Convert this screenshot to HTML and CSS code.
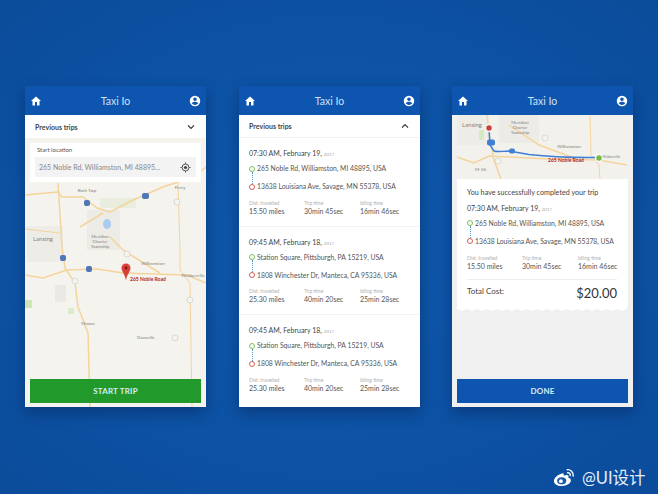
FILE: index.html
```html
<!DOCTYPE html>
<html lang="en">
<head>
  <meta charset="UTF-8" />
  <meta name="viewport" content="width=device-width, initial-scale=1.0" />
  <title>Taxi Io</title>
  <link rel="stylesheet" href="styles.css">
</head>
<body>
  <main class="screens">

    <!-- Start trip -->
    <section class="phone">
      <header class="topbar">
        <svg class="topbar-icon" viewBox="0 0 24 24"><path d="M10 21v-7h4v7h5v-9h3L12 3 2 12h3v9z"/></svg>
        <div class="topbar-title">Taxi Io</div>
        <svg class="topbar-icon" viewBox="0 0 24 24"><path fill-rule="evenodd" d="M12 1.500a10.500 10.500 0 1 0 0 21 10.500 10.500 0 0 0 0-21zm0 3.500a3.600 3.600 0 1 1 0 7.200 3.600 3.600 0 0 1 0-7.200zm0 15a8 8 0 0 1-6.500-3.300c.1-2.200 4.400-3.300 6.500-3.300s6.400 1.100 6.500 3.300A8 8 0 0 1 12 20z"/></svg>
      </header>
      <div class="trips-head">
        <span>Previous trips</span>
        <svg class="chevron" viewBox="0 0 12 8"><path d="M1.500 1.500 6 6l4.500-4.500"/></svg>
      </div>
      <div class="map-area">
        <svg class="map" viewBox="25 138 181 269">
          <rect x="25" y="138" width="181" height="269" fill="#f4f3ee"/>
          <rect x="27" y="226" width="36" height="36" fill="#eeece7"/>
          <rect x="87" y="210" width="33" height="40" fill="#ecebe6"/>
          <rect x="100" y="198" width="36" height="10" fill="#e8eddd"/>
          <rect x="25" y="300" width="7" height="8" fill="#cfe5b4"/>
          <rect x="68" y="308" width="6" height="6" fill="#dbeac8"/>
          <rect x="55" y="285" width="11" height="17" fill="#ebe9e4"/>
          <ellipse cx="107" cy="224" rx="4" ry="5" fill="#a9cdf0"/>
          <g class="road">
            <path d="M25 195 58 192 62 197 83 197 97 208 110 212 133 200 163 187 193 177 206 167"/>
            <path d="M58 183 62 247 65 268 75 283 78 307 88 333 90 407"/>
            <path d="M25 275 43 278 67 270 97 269 123 273 187 275 206 283"/>
            <path d="M80 227 103 213"/>
            <path d="M110 237 123 250 147 265 160 273"/>
            <path class="road-thin" d="M178 183 180 250 180 270 190 283 192 407"/>
            <path class="road-thin" d="M25 229 60 233"/>
          </g>
          <g class="map-label">
            <text x="87" y="192" text-anchor="middle">Bath Twp</text>
            <text x="180" y="189" text-anchor="middle">Perry</text>
            <text x="33" y="241" class="map-city">Lansing</text>
            <text x="100" y="238" text-anchor="middle">Meridian</text>
            <text x="100" y="243" text-anchor="middle">Charter</text>
            <text x="100" y="248" text-anchor="middle">Township</text>
            <text x="153" y="265" text-anchor="middle">Williamston</text>
            <text x="205" y="276.500" text-anchor="end">Webberville</text>
            <text x="88" y="325" text-anchor="middle">Mason</text>
            <text x="146" y="339" text-anchor="middle">Dansville</text>
          </g>
          <g class="shield">
            <rect x="84" y="200" width="6" height="6" rx="2"/>
            <rect x="142" y="193" width="7" height="6" rx="2"/>
            <rect x="86" y="266" width="6" height="6" rx="2"/>
            <rect x="60" y="255" width="6" height="6" rx="2"/>
          </g>
          <g class="shield-light">
            <circle cx="177" cy="202" r="3"/>
            <circle cx="75" cy="281" r="3"/>
            <circle cx="127" cy="254" r="3"/>
            <circle cx="190" cy="300" r="3"/>
            <circle cx="175" cy="338" r="3"/>
          </g>
          <path d="M126 263.500a4.500 4.500 0 0 0-4.500 4.500c0 3.500 3.500 6 4.500 12.500 1-6.500 4.500-9 4.500-12.500a4.500 4.500 0 0 0-4.500-4.500z" fill="#d8403a"/>
          <circle cx="126" cy="268" r="1.400" fill="#7d1512"/>
          <text x="130" y="281" class="map-place">265 Noble Road</text>
        </svg>
        <div class="location-card">
          <div class="location-label">Start location</div>
          <div class="location-field">
            <span>265 Noble Rd, Williamston, MI 48895...</span>
            <svg class="target" viewBox="0 0 24 24"><circle cx="12" cy="12" r="7.500"/><circle class="target-dot" cx="12" cy="12" r="3.500"/><path d="M12 1v3M12 20v3M1 12h3M20 12h3"/></svg>
          </div>
        </div>
        <button class="action action-green">START TRIP</button>
      </div>
    </section>

    <!-- Previous trips list -->
    <section class="phone">
      <header class="topbar">
        <svg class="topbar-icon" viewBox="0 0 24 24"><path d="M10 21v-7h4v7h5v-9h3L12 3 2 12h3v9z"/></svg>
        <div class="topbar-title">Taxi Io</div>
        <svg class="topbar-icon" viewBox="0 0 24 24"><path fill-rule="evenodd" d="M12 1.500a10.500 10.500 0 1 0 0 21 10.500 10.500 0 0 0 0-21zm0 3.500a3.600 3.600 0 1 1 0 7.200 3.600 3.600 0 0 1 0-7.200zm0 15a8 8 0 0 1-6.500-3.300c.1-2.200 4.400-3.300 6.500-3.300s6.400 1.100 6.500 3.300A8 8 0 0 1 12 20z"/></svg>
      </header>
      <div class="trips-head trips-head-line">
        <span>Previous trips</span>
        <svg class="chevron" viewBox="0 0 12 8"><path d="M1.500 6.500 6 2l4.500 4.500"/></svg>
      </div>

      <article class="trip">
        <div class="trip-date">07:30 AM, February 19, <small>2017</small></div>
        <div class="route">
          <div class="route-marks"><i class="dot dot-start"></i><i class="dots"></i><i class="dot dot-end"></i></div>
          <div class="route-names"><span>265 Noble Rd, Williamston, MI 48895, USA</span><span>13638 Louisiana Ave, Savage, MN 55378, USA</span></div>
        </div>
        <div class="stats">
          <div><label>Dist. travelled</label><b>15.50 miles</b></div>
          <div><label>Trip time</label><b>30min 45sec</b></div>
          <div><label>Idling time</label><b>16min 46sec</b></div>
        </div>
      </article>

      <article class="trip">
        <div class="trip-date">09:45 AM, February 18, <small>2017</small></div>
        <div class="route">
          <div class="route-marks"><i class="dot dot-start"></i><i class="dots"></i><i class="dot dot-end"></i></div>
          <div class="route-names"><span>Station Square, Pittsburgh, PA 15219, USA</span><span>1808 Winchester Dr, Manteca, CA 95336, USA</span></div>
        </div>
        <div class="stats">
          <div><label>Dist. travelled</label><b>25.30 miles</b></div>
          <div><label>Trip time</label><b>40min 20sec</b></div>
          <div><label>Idling time</label><b>25min 28sec</b></div>
        </div>
      </article>

      <article class="trip">
        <div class="trip-date">09:45 AM, February 18, <small>2017</small></div>
        <div class="route">
          <div class="route-marks"><i class="dot dot-start"></i><i class="dots"></i><i class="dot dot-end"></i></div>
          <div class="route-names"><span>Station Square, Pittsburgh, PA 15219, USA</span><span>1808 Winchester Dr, Manteca, CA 95336, USA</span></div>
        </div>
        <div class="stats">
          <div><label>Dist. travelled</label><b>25.30 miles</b></div>
          <div><label>Trip time</label><b>40min 20sec</b></div>
          <div><label>Idling time</label><b>25min 28sec</b></div>
        </div>
      </article>
    </section>

    <!-- Receipt -->
    <section class="phone phone-grey">
      <header class="topbar">
        <svg class="topbar-icon" viewBox="0 0 24 24"><path d="M10 21v-7h4v7h5v-9h3L12 3 2 12h3v9z"/></svg>
        <div class="topbar-title">Taxi Io</div>
        <svg class="topbar-icon" viewBox="0 0 24 24"><path fill-rule="evenodd" d="M12 1.500a10.500 10.500 0 1 0 0 21 10.500 10.500 0 0 0 0-21zm0 3.500a3.600 3.600 0 1 1 0 7.200 3.600 3.600 0 0 1 0-7.200zm0 15a8 8 0 0 1-6.500-3.300c.1-2.200 4.400-3.300 6.500-3.300s6.400 1.100 6.500 3.300A8 8 0 0 1 12 20z"/></svg>
      </header>
      <div class="receipt">
        <svg class="route-map" viewBox="458 115 170 64">
          <rect x="458" y="115" width="170" height="64" fill="#f2f1ec"/>
          <rect x="458" y="115" width="32" height="30" fill="#eeece7"/>
          <rect x="500" y="115" width="40" height="28" fill="#ecebe6"/>
          <rect x="480" y="130" width="5" height="10" fill="#d8e8c2"/>
          <g class="road">
            <path d="M488 115 491 140 495 160 502 179"/>
            <path d="M458 157 475 163 490 156 510 157 550 159 600 160 628 165"/>
            <path d="M510 125 540 145 575 158"/>
            <path class="road-thin" d="M591 115 592 155 600 165 601 179"/>
          </g>
          <g class="map-label">
            <text x="473" y="127" text-anchor="middle" class="map-city">Lansing</text>
            <text x="521" y="124" text-anchor="middle">Meridian</text>
            <text x="521" y="129" text-anchor="middle">Charter</text>
            <text x="521" y="134" text-anchor="middle">Township</text>
            <text x="570" y="147.500" text-anchor="middle">Williamston</text>
            <text x="603" y="157.500" class="map-tiny">Webberville</text>
            <text x="487" y="171" text-anchor="end">M-36</text>
          </g>
          <g class="shield-light">
            <circle cx="546" cy="138" r="3"/>
            <circle cx="499" cy="161" r="3"/>
          </g>
          <path d="M490 128 491 145 495 151Q497 152 510 151L530 154.500Q560 158 600 157.500" fill="none" stroke="#3f7fd4" stroke-width="1.500"/>
          <rect x="488" y="139.500" width="8" height="6" rx="2" fill="#3f7fd4"/>
          <rect x="510" y="148.500" width="6" height="5" rx="2" fill="#3f7fd4"/>
          <circle cx="490" cy="128" r="3.500" fill="#c9403c" stroke="#f7f7f7" stroke-width="1.500"/>
          <circle cx="600" cy="158" r="3.500" fill="#74b944" stroke="#f7f7f7" stroke-width="1.500"/>
          <text x="549" y="162" class="map-place">265 Noble Road</text>
        </svg>
        <div class="ticket">
          <p class="ticket-note">You have successfully completed your trip</p>
          <div class="trip-date">07:30 AM, February 19, <small>2017</small></div>
          <div class="route">
            <div class="route-marks"><i class="dot dot-start"></i><i class="dots"></i><i class="dot dot-end"></i></div>
            <div class="route-names"><span>265 Noble Rd, Williamston, MI 48895, USA</span><span>13638 Louisiana Ave, Savage, MN 55378, USA</span></div>
          </div>
          <div class="stats">
            <div><label>Dist. travelled</label><b>15.50 miles</b></div>
            <div><label>Trip time</label><b>30min 45sec</b></div>
            <div><label>Idling time</label><b>16min 46sec</b></div>
          </div>
          <div class="total">
            <span>Total Cost:</span>
            <strong>$20.00</strong>
          </div>
        </div>
        <svg class="ticket-edge" viewBox="0 0 170 5" preserveAspectRatio="none"><path fill="#fff" d="M0 0h170v3l-5 2-5-2-5 2-5-2-5 2-5-2-5 2-5-2-5 2-5-2-5 2-5-2-5 2-5-2-5 2-5-2-5 2-5-2-5 2-5-2-5 2-5-2-5 2-5-2-5 2-5-2-5 2-5-2-5 2-5-2-5 2-5-2-5 2-5-2-5 2-5-2-5 2-5-2z"/></svg>
      </div>
      <button class="action action-blue">DONE</button>
    </section>
  </main>

  <div class="watermark">
    <svg class="weibo" viewBox="0 0 24 20">
      <path fill="#fff" d="M10 5.500C5 6.500 .8 10.800 1 14c.2 3.500 4.500 5.500 9 5.200 5-.3 9.500-3 9.500-6 0-1.800-1.500-2.500-2.800-2.900.6-1.600.3-2.800-1.700-2.900-1 0-2.300.4-3 .7-.3.100-.4 0-.3-.4.300-1.600-.1-2.600-1.700-2.200z"/>
      <ellipse cx="9.500" cy="13.600" rx="5" ry="3.900" fill="#1a5aa8"/>
      <circle cx="8.600" cy="14" r="2.100" fill="#fff"/>
      <path fill="none" stroke="#fff" stroke-width="1.500" stroke-linecap="round" d="M15.500 1.500c3.500-.5 7 2.500 6.500 7M15.800 4.800c1.800-.3 3.300 1 3 3"/>
    </svg>
    <span>@UI设计</span>
  </div>
</body>
</html>
```

FILE: styles.css
```css
* {
  box-sizing: border-box;
}
body {
  margin: 0;
  height: 494px;
  overflow: hidden;
  font-family: "Lato", "Noto Sans CJK SC", sans-serif;
  color: #444;
  background: radial-gradient(ellipse at 50% 50%, #0f57aa 0%, #0d52a4 60%, #0b4b9a 100%);
}
.screens {
  display: flex;
  gap: 33px;
  padding: 86px 0 0 25px;
}
.phone {
  width: 181px;
  height: 321px;
  display: flex;
  flex-direction: column;
  background: #fff;
  box-shadow: 0 6px 14px rgba(4, 30, 80, 0.45);
}
.phone-grey {
  background: #f0f0f0;
  margin-left: -1px;
}
.topbar {
  height: 29px;
  flex: none;
  display: flex;
  justify-content: space-between;
  align-items: center;
  padding: 0 5px;
  background: #0e55b0;
  color: #fff;
}
.topbar-icon {
  width: 12px;
  height: 12px;
  fill: #fff;
}
.topbar-title {
  font-size: 10.5px;
  color: #cfe0f4;
}
.trips-head {
  height: 23px;
  flex: none;
  display: flex;
  justify-content: space-between;
  align-items: center;
  padding: 0 11px 0 10px;
  font-size: 7px;
  font-weight: 700;
  color: #444;
}
.trips-head-line {
  border-bottom: 1px solid #f2f2f2;
}
.chevron {
  width: 8px;
  height: 6px;
  fill: none;
  stroke: #333;
  stroke-width: 1.800;
}

/* map screen */
.map-area {
  position: relative;
  flex: 1;
}
.map {
  display: block;
  width: 181px;
  height: 269px;
}
.road {
  fill: none;
  stroke: #f5d49c;
  stroke-width: 1.500;
}
.road-thin {
  stroke-width: 1;
}
.map-label {
  font-size: 4.500px;
  fill: #85837d;
}
.map-city {
  font-size: 6px;
}
.map-tiny {
  font-size: 3.500px;
}
.map-place {
  font-size: 5px;
  font-weight: 700;
  fill: #b3242a;
}
.shield {
  fill: #4f76b8;
}
.shield-light {
  fill: #f4f3ee;
  stroke: #d0cec8;
  stroke-width: 0.700;
}
.location-card {
  position: absolute;
  top: 5px;
  left: 5px;
  width: 171px;
  height: 39px;
  padding: 3px 5px 0;
  background: #fff;
}
.location-label {
  padding-left: 2px;
  font-size: 6px;
  line-height: 8px;
  color: #555;
  margin-bottom: 3px;
}
.location-field {
  height: 20px;
  display: flex;
  justify-content: space-between;
  align-items: center;
  padding: 0 5px 0 4px;
  font-size: 7px;
  color: #888;
  background: #f3f3f3;
}
.target {
  width: 11px;
  height: 11px;
  fill: none;
  stroke: #444;
  stroke-width: 2;
}
.target-dot {
  fill: #444;
  stroke: none;
}
.action {
  display: block;
  border: none;
  width: 171px;
  height: 24px;
  font-family: inherit;
  font-size: 8px;
  font-weight: 700;
  letter-spacing: 0.2px;
  color: #d8ecf5;
}
.action-green {
  position: absolute;
  left: 5px;
  bottom: 4px;
  background: #229a2b;
}
.action-blue {
  flex: none;
  margin: 0 5px 4px;
  background: #0e55b0;
}

/* trip details */
.trip {
  height: 88.500px;
  padding: 10px 10px 0;
  border-bottom: 1px solid #f2f2f2;
}
.trip:last-child {
  border-bottom: none;
}
.trip-date {
  font-size: 7px;
  line-height: 10px;
  color: #444;
}
.trip-date small {
  font-size: 4.500px;
  color: #aaa;
}
.route {
  display: flex;
  gap: 2px;
  margin-top: 4px;
  height: 27px;
}
.route-marks {
  width: 6px;
  display: flex;
  flex-direction: column;
  align-items: center;
  padding: 1.500px 0;
}
.dot {
  width: 6px;
  height: 6px;
  flex: none;
  border-radius: 50%;
  border: 1px solid;
}
.dot-start {
  border-color: #7fbe5a;
}
.dot-end {
  border-color: #d2615a;
}
.dots {
  flex: 1;
  border-left: 1px dotted #4f9cc4;
}
.route-names {
  display: flex;
  flex-direction: column;
  justify-content: space-between;
  font-size: 6.800px;
  line-height: 9px;
  white-space: nowrap;
  color: #555;
}
.stats {
  display: grid;
  grid-template-columns: 55px 56px 1fr;
  margin-top: 8.500px;
  white-space: nowrap;
}
.stats label {
  display: block;
  font-size: 5px;
  line-height: 7px;
  color: #b0b0b0;
}
.stats b {
  display: block;
  font-size: 7px;
  line-height: 9px;
  font-weight: 400;
  color: #555;
}

/* receipt */
.receipt {
  flex: 1;
  margin: 0 5px;
}
.route-map {
  display: block;
  width: 170px;
  height: 64px;
}
.ticket {
  height: 127px;
  padding: 8.500px 11px 0 10px;
  background: #fff;
}
.ticket-note {
  margin: 0 0 6px;
  font-size: 7.200px;
  line-height: 9px;
  color: #444;
}
.ticket .stats {
  margin-top: 9px;
}
.total {
  display: flex;
  justify-content: space-between;
  align-items: flex-start;
  margin-top: 8px;
  padding-top: 6px;
  border-top: 1px solid #eee;
  font-size: 8px;
  color: #444;
}
.total strong {
  font-size: 13px;
  line-height: 15px;
  font-weight: 400;
  color: #333;
}
.ticket-edge {
  display: block;
  width: 170px;
  height: 5px;
}

.watermark {
  position: absolute;
  left: 553px;
  top: 465px;
  display: flex;
  align-items: center;
  gap: 7px;
  font-size: 16.500px;
  color: #e6eef8;
}
.weibo {
  width: 22px;
  height: 19px;
}
```
